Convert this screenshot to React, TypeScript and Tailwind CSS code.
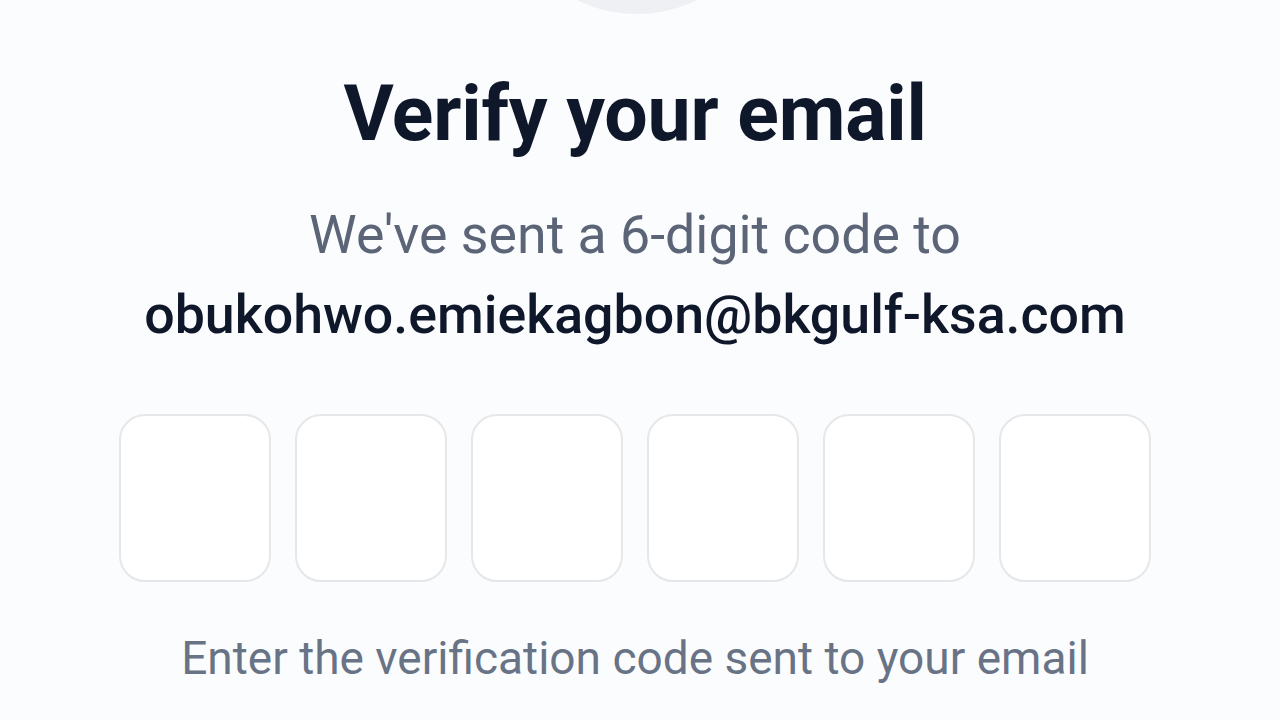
import React from "react";

export default function App() {
  return (
    <div
      className="relative w-[1280px] h-[720px] overflow-hidden bg-[#fbfcfd] flex flex-col items-center pr-[10px]"
      style={{ fontFamily: "Roboto, 'Liberation Sans', sans-serif" }}
    >
      <div className="absolute left-[501px] top-[-258px] w-[272px] h-[272px] rounded-full bg-[#eff0f4]" />
      <h1 className="mt-[69px] text-[77px] leading-[90px] font-bold text-[#0f172a] tracking-[-0.2px] whitespace-nowrap">
        Verify your email
      </h1>
      <p className="mt-[36px] text-[53.7px] leading-[80px] text-[#5b6577] whitespace-nowrap">
        We've sent a 6-digit code to
      </p>
      <p className="text-[53.7px] leading-[80px] font-medium text-[#0f172a] whitespace-nowrap">
        obukohwo.emiekagbon@bkgulf-ksa.com
      </p>
      <div className="mt-[59px] flex gap-[24px]">
        {[0, 1, 2, 3, 4, 5].map((i) => (
          <div
            key={i}
            className="w-[152px] h-[168px] rounded-[26px] border-2 border-[#e6e7ea] bg-white"
          />
        ))}
      </div>
      <p className="mt-[44px] text-[46px] leading-[64px] text-[#697386] whitespace-nowrap">
        Enter the verification code sent to your email
      </p>
    </div>
  );
}
